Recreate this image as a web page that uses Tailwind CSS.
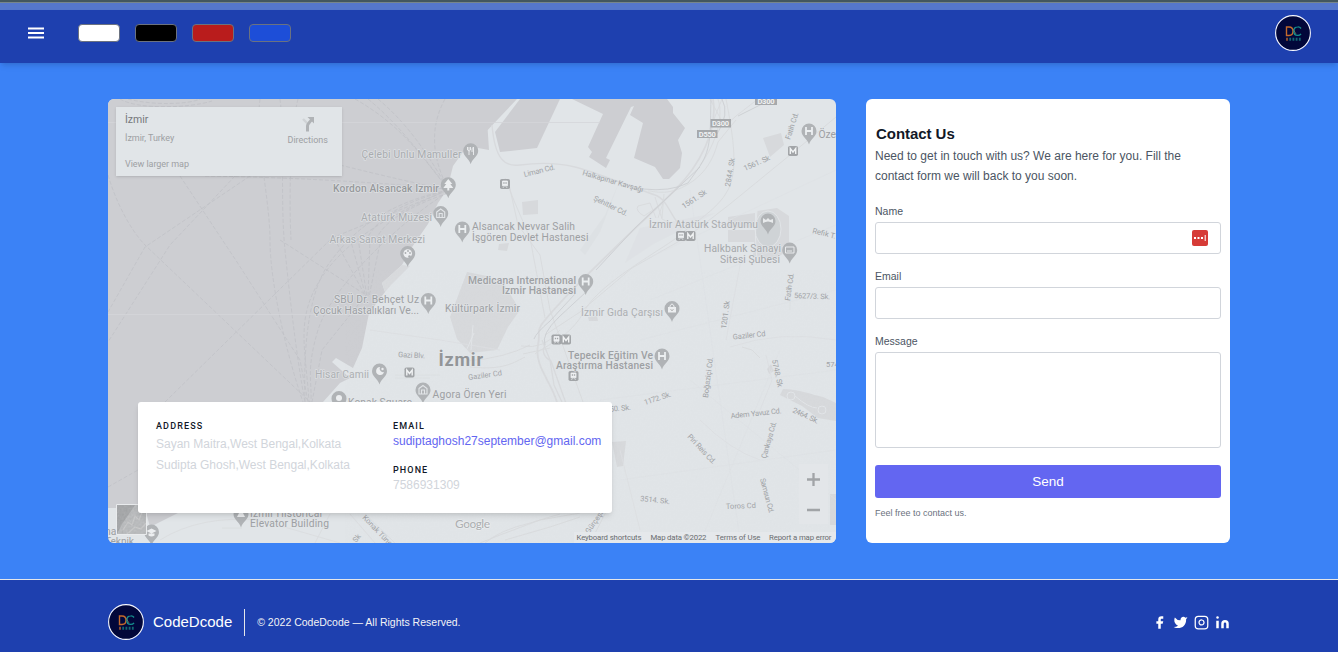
<!DOCTYPE html>
<html lang="en">
<head>
<meta charset="utf-8">
<title>CodeDcode – Contact</title>
<script src="https://cdn.jsdelivr.net/npm/@tailwindcss/browser@4"></script>
</head>
<body class="h-[652px] overflow-hidden bg-[#3b82f6] font-['Liberation_Sans',Arial,sans-serif] flex flex-col">

<svg class="hidden">
  <defs>
    <symbol id="logo" viewBox="0 0 36 36">
      <circle cx="18" cy="18" r="17.4" fill="#02073a" stroke="#f4f6ff" stroke-width="1.1"/>
      <path d="M11.500 12h2.500c2.700 0 4 2 4 4.300s-1.500 4.200-4 4.200h-2.500z" fill="none" stroke="#c4692b" stroke-width="1.400"/>
      <path d="M26 13.500c-.8-1.200-2-1.700-3.300-1.600-2.400.1-3.900 1.900-3.900 4.300s1.600 4.200 3.900 4.200c1.500 0 2.600-.6 3.300-1.600" fill="none" stroke="#16908f" stroke-width="1.400"/>
      <path d="M18 14l3 5" stroke="#6d7f62" stroke-width=".8"/>
      <path d="M11 24.300h2" stroke="#a85c30" stroke-width="3" opacity=".8"/>
      <path d="M14.300 24.300h12" stroke="#16807f" stroke-width="3" stroke-dasharray="1.800 1.400" opacity=".8"/>
    </symbol>
  </defs>
</svg>

<div class="h-[10px] shrink-0 bg-[#5577cb] border-t-2 border-[#43575e]"><div class="h-px bg-[#77868a]"></div></div>

<header class="relative h-[53px] shrink-0 bg-[#1e40af] flex items-start px-[27px] shadow-md">
  <svg class="w-[18px] h-[14px] mt-4" viewBox="0 0 18 14"><path d="M1 2.500h16M1 7h16M1 11.500h16" stroke="#fff" stroke-width="2.100"/></svg>
  <div class="flex gap-[15px] ml-[33px] mt-[14px]">
    <span class="w-[42px] h-[18px] rounded border border-[#6b7280] bg-white"></span>
    <span class="w-[42px] h-[18px] rounded border border-[#6b7280] bg-black"></span>
    <span class="w-[42px] h-[18px] rounded border border-[#6b7280] bg-[#b91c1c]"></span>
    <span class="w-[42px] h-[18px] rounded border border-[#6b7280] bg-[#1d4ed8]"></span>
  </div>
  <svg class="w-9 h-9 ml-auto mt-[5px]"><use href="#logo"/></svg>
</header>

<main class="flex-1 flex items-start px-[108px] pt-9 gap-[30px]">
  <section class="relative w-[728px] h-[444px] rounded-md overflow-hidden bg-[#e1e5e8]">
    <svg class="block w-[728px] h-[444px] font-[Roboto,sans-serif]" viewBox="108 99 728 444">
      <defs>
        <g id="pin"><path d="M0 13.500C-1.500 8-7.500 5.500-7.500 0a7.500 7.500 0 0 1 15 0C7.500 5.500 1.500 8 0 13.500z" fill="#b0b3b6"/></g>
        <g id="pinH"><use href="#pin"/><path d="M-3 -4v8M3 -4v8M-3 0h6" stroke="#eceff1" stroke-width="1.800"/></g>
        <g id="pinMuseum"><use href="#pin"/><path d="M-4 -1.500L0-4.500 4-1.500v5.500h-8zM-1.500 3.500V0h3v3.500" fill="none" stroke="#e2e5e8" stroke-width="1.100"/></g>
        <g id="metro"><rect x="-5" y="-5" width="10" height="10" rx="1.800" fill="#a2a5a8"/><path d="M-2.700 3v-5.500L0 1l2.700-3.500V3" fill="none" stroke="#f0f2f3" stroke-width="1.400"/></g>
        <g id="tram"><rect x="-5" y="-5" width="10" height="10" rx="1.800" fill="#a2a5a8"/><path d="M-2.500 -3h5v4.800h-5zM-2 3.800l1-1.300M2 3.800l-1-1.300" fill="#eef0f2" stroke="#eef0f2" stroke-width=".8"/><path d="M-1.700 -1.800h1.300v1.500h-1.300zM.4 -1.800h1.300v1.500H.4z" fill="#a2a5a8"/></g>
        <filter id="grain" x="0" y="0" width="1" height="1"><feTurbulence type="fractalNoise" baseFrequency=".5" numOctaves="2"/><feColorMatrix type="saturate" values="0"/></filter>
      </defs>

      <!-- sea -->
      <g fill="#cdced2">
        <path d="M108 99H517L487.700 130 489 150 478 148 463 152 453 166 447 190 438 203 428 224 410 250 402 265 382 283 385 292 369 313 362 348 353 368 336 358 332 362 350 378 340 383 323 402 180 512 150 527 145 508 108 508z"/>
        <path d="M520 99h40L537 148 500 152 495 132z"/>
        <path d="M572 99L603 114 588 147 592 152 589 157 606 168 610 160 606 158 631 107 634 106 630 115 643 123 634 158 655 167 663 179H669L680 168 682 153 678 140 685 128 673 113V107L667 99z"/>
      </g>
      <path d="M402 265L382 283 385 292 392 284 410 266z" fill="#d8dadd"/>

      <!-- ferry lines -->
      <g fill="none" stroke="#c0c2c6" stroke-width=".8" stroke-dasharray="4 2">
        <path d="M120 99C138 110 190 108 212 101M128 99C155 106 190 104 200 99M108 175C120 215 138 238 145 245L310 402"/>
        <path d="M180 176L237 262 300 360 308 402M250 176L145 247 108 312M235 176L170 245 108 342"/>
        <path d="M260 99C255 140 270 200 270 240S285 350 303 402M280 99C285 140 280 200 285 250S297 360 305 402M298 99C290 130 289 200 291 240"/>
        <path d="M355 99C410 130 430 170 448 188M368 99C400 125 425 160 448 188M378 99C415 130 433 165 448 188M445 99C425 135 438 170 448 188"/>
        <path d="M205 176Q330 178 448 189M340 165Q400 180 448 190M448 190C380 205 350 235 330 262S303 340 305 402M448 190C390 215 345 240 320 280S306 350 309 402M448 192C395 225 330 290 318 330S312 380 311 402"/>
        <path d="M165 402L332 238 448 190M280 240L366 295 322 350 312 402M334 238L366 297M350 238L366 297M358 238L367 297M370 238L368 297M381 238L369 297"/>
        <path d="M448 190C415 200 382 210 366 240M448 193C420 203 384 218 376 240M108 487L138 470"/>
      </g>
      <path d="M108 122.500H600M108 314.500H368" stroke="#d4d6d9" stroke-width=".8"/>

      <!-- parks and blocks -->
      <g fill="#d7d9dc">
        <path d="M467 272L487 276 505 286 520 310 508 327 497 350 470 353 457 339 450 317z"/>
        <path d="M522 202l16-2v14l-15 1zM499 244l10-1-2 8-9-1z"/>
        <path d="M757 211l20-3 12 8v34l-16 10-20-4zM728 217l27-4v15h-27zM728 230h27v12h-27zM763 138l18-5 3 12-14 12z"/>
        <path d="M783 389c15 0 30 6 40 8l13 6v18l-18-3-16-12-22-11zM612 442l14-1-3 25-6 1zM830 494h6v31h-6zM767 369l4-5 3 7-5 3zM588 317l9-1 1 5-9 0z"/>
        <path d="M605 215L620 180 600 232 585 255 580 250z" opacity=".35"/>
        <path d="M640 228l75-15-60 30-30 20z" opacity=".25"/>
      </g>
      <ellipse cx="768" cy="229" rx="13" ry="18" fill="#cfd3d6" stroke="#e1e4e7"/>
      <g fill="none" stroke="#e2e5e8"><path d="M728 229h27M757 211q-3 25 0 47M471 350l2-25M466 351l8-18"/><circle cx="791" cy="396" r="4"/><circle cx="822" cy="410" r="4"/><path d="M795 396q14 12 22 12"/></g>

      <!-- roads -->
      <g fill="none" stroke="#d8dadd" stroke-width=".9">
        <path d="M492 125C495 160 505 167 520 165S555 162 575 167 640 190 655 195 672 225 686 228" stroke-width="1.400"/>
        <path d="M713 99C718 130 700 165 675 190S590 270 560 303 542 325 538 345 550 380 557 402" stroke-width="1.800"/>
        <path d="M718 99C725 120 712 150 700 165M736 120L718 142C713 160 705 175 685 186S650 190 648 191"/>
        <path d="M710 99l15 28M722 99l-12 30M758 99L736 116 725 126M726 99C734 140 738 170 728 190S690 225 680 235 600 282 585 310 546 345 535 354"/>
        <path d="M836 117L790 155 730 204 690 235 632 268 580 312 545 335M663 203L644 216q-9-5-6-10l12-3 6 15M655 197l7 22 8 4M663 203l-5 15M664 194l-2 24"/>
        <path d="M508 180L518 225 540 255 550 310 568 360 583 402M505 178l10 25 15 35 15 80M521 346Q545 350 560 330M523 354L550 348"/>
        <path d="M470 367C500 370 510 365 525 357M467 361Q505 358 530 345"/>
        <path d="M395 375H440M395 378H430M370 330l70 10 60 10" stroke="#dcdfe2"/>
        <path d="M542 340l8 20 4 25 14 30M545 345q-5 10 6 16l18 51" stroke-width="1.300"/>
        <path d="M480 543L500 535 540 520 580 513M485 543Q500 530 530 523L560 514M505 540l45-13 30-10M590 543l18-35"/>
        <path d="M365 514l30 29M350 514l25 29M330 514l-15 29M160 540Q200 515 260 520L340 543M222 528h20M108 535q20-15 42-5" stroke="#dadcdf"/>
        <path d="M620 450l20 80M730 347Q780 330 836 340M741 260l-15 80M790 280v30M700 420q30 30 60 40M760 410l12-30-6-25" stroke="#dcdfe2"/><path d="M742 347l10 3 8 8"/>
      </g>
      <g fill="none" stroke="#c9cccf" stroke-width=".8"><path d="M711 99C710 130 712 148 700 166L688 183Q670 192 643 189M722 99q8 15-5 35M700 167L635 228 596 270M586 292l-27 25q-18 17-14 28M575 294l-25 27q-14 12-16 18M738 116L762 104"/></g>
      <path d="M640 262L836 170M650 300L836 225M690 190L740 540M640 340L836 290M600 400L836 370M620 480L836 450M690 380L836 500M780 350L700 543" stroke="#dee1e4" stroke-width=".6" fill="none"/>
      <path d="M400 270h436v273H560V402H345l40-110z" filter="url(#grain)" opacity=".025"/>

      <!-- road shields -->
      <g fill="#a6a9ac"><path d="M755 99h22v6h-22zM710.500 119h20.500v8.500h-20.500zM697 130h20.500v8h-20.500z"/></g>
      <g fill="#f0f2f3" font-size="7.500" font-weight="700" text-anchor="middle"><text x="766" y="103.500" textLength="17">D300</text><text x="720.500" y="126" textLength="17">D300</text><text x="707.300" y="137" textLength="17">D550</text></g>

      <!-- pins -->
      <g>
        <use href="#pin" x="470.700" y="150.700"/><path d="M467.500 147v3q2 2 3 0v-3M469 147v8M473.500 155v-8q-2 1-1.500 5" fill="none" stroke="#e8eaec"/>
        <use href="#pin" x="448.300" y="184.700"/><path d="M448.300 179l4 5h-2l3 4h-4v2.500h-2V188h-4l3-4h-2z" fill="#eceef0"/>
        <use href="#pinMuseum" x="440.700" y="213.500"/><use href="#pinH" x="462.300" y="229"/>
        <use href="#pin" x="407.700" y="253.500"/><circle cx="407.700" cy="253.500" r="4.300" fill="#eceef0"/><g fill="#a9acaf"><circle cx="405.500" cy="253" r=".9"/><circle cx="408" cy="251" r=".9"/><circle cx="410" cy="253" r=".9"/><circle cx="409.500" cy="256.500" r="1.300"/></g>
        <use href="#pinH" x="428.300" y="300.500"/><use href="#pinH" x="585.700" y="281.500"/><use href="#pinH" x="662" y="356"/><use href="#pinH" x="809" y="131"/>
        <use href="#pin" x="672" y="308.500"/><path d="M668 307h8v5.500h-8z" fill="#eceef0"/><path d="M670 307v-1q2-4 4 0v1" fill="none" stroke="#eceef0"/><path d="M670.500 309.500q1.500 2 3 0" stroke="#aaa" fill="none"/>
        <use href="#pin" x="379.500" y="371"/><path d="M380 367a4 4 0 1 0 4 5 3.500 3.500 0 0 1-4-5z" fill="#eceef0"/><circle cx="382.500" cy="369" r="1.200" fill="#eceef0"/>
        <use href="#pinMuseum" x="423" y="390"/>
        <use href="#pin" x="339" y="398.500"/><circle cx="339" cy="398" r="3" fill="#eceef0"/>
        <use href="#pin" x="768" y="221"/><path d="M763 223q5-3 10 0v-4l-3 1-2-2-2 2-3-2z" fill="#e8eaec"/>
        <use href="#pin" x="789.700" y="250"/><path d="M785.500 247h8.500v6h-8.500z" fill="none" stroke="#e8eaec"/><path d="M787 251h5" stroke="#e8eaec"/>
        <use href="#pin" x="241" y="514"/><path d="M237 517h8l-2-4h-4z" fill="#eceef0"/>
        <use href="#pin" x="151.500" y="532"/><path d="M146.500 531l5-2.500 5 2.500-5 2.500zM148.500 533.500v2q3 2 6 0v-2" fill="#eceef0"/>
        <use href="#tram" x="505" y="184"/><use href="#metro" x="793" y="151"/><use href="#tram" x="681" y="236"/><use href="#metro" x="690.500" y="236"/>
        <use href="#tram" x="556.500" y="339.500"/><use href="#metro" x="566" y="339.500"/><use href="#tram" x="573.500" y="376"/><use href="#metro" x="409.500" y="372.500"/>
      </g>

      <!-- place names -->
      <g font-size="10.300" fill="#9da0a3" stroke="#e3e6e9" stroke-width="1.600" stroke-opacity=".7" paint-order="stroke" stroke-linejoin="round">
        <text x="361.500" y="158" textLength="100" fill="#a9acaf">Çelebi Unlu Mamuller</text>
        <text x="333" y="192" textLength="106" fill="#97999c" font-weight="500">Kordon Alsancak Izmir</text>
        <text x="361" y="220.500" textLength="71" fill="#a9acaf">Atatürk Müzesi</text>
        <text x="329.500" y="243" textLength="95.500" fill="#a9acaf">Arkas Sanat Merkezi</text>
        <text x="472" y="230" textLength="103">Alsancak Nevvar Salih</text>
        <text x="472" y="241" textLength="116.500">İşgören Devlet Hastanesi</text>
        <text x="649" y="228" textLength="109" fill="#a9acaf">İzmir Atatürk Stadyumu</text>
        <text x="704" y="252" textLength="77" fill="#a5a8ab">Halkbank Sanayi</text>
        <text x="720" y="263" textLength="60" fill="#a5a8ab">Sitesi Şubesi</text>
        <text x="818.500" y="137.500">Öze</text>
        <text x="468" y="283.500" textLength="108" font-weight="500">Medicana International</text>
        <text x="502" y="294" textLength="74" font-weight="500">İzmir Hastanesi</text>
        <text x="334" y="303" textLength="85">SBÜ Dr. Behçet Uz</text>
        <text x="313" y="313.500" textLength="106">Çocuk Hastalıkları Ve...</text>
        <text x="445" y="312" textLength="75">Kültürpark İzmir</text>
        <text x="581" y="316" textLength="82" fill="#adb0b3">İzmir Gıda Çarşısı</text>
        <text x="568" y="358.500" textLength="85" font-weight="500">Tepecik Eğitim Ve</text>
        <text x="556" y="369" textLength="97" font-weight="500">Araştırma Hastanesi</text>
        <text x="315" y="378" textLength="54" fill="#adb0b3">Hisar Camii</text>
        <text x="432.500" y="397.500" textLength="74">Agora Ören Yeri</text>
        <text x="348" y="405.500" textLength="64">Konak Square</text>
        <text x="250" y="516.500" textLength="72">İzmir Historical</text>
        <text x="250" y="527" textLength="79">Elevator Building</text>
        <text x="105" y="534.500">na</text><text x="105" y="545" textLength="29">Teknik</text>
        <text x="438.500" y="366" font-size="18" font-weight="700" textLength="44.500" fill="#929598">İzmir</text>
      </g>

      <!-- street names -->
      <g font-size="7.500" fill="#a0a3a6">
        <text transform="translate(524.500 177) rotate(-14)" textLength="32">Liman Cd.</text>
        <text transform="translate(582 175) rotate(16)" textLength="63">Halkapınar Kavşağı</text>
        <text transform="translate(593 200) rotate(26)" textLength="37">Şehitler Cd.</text>
        <text transform="translate(684 209) rotate(-34)" textLength="28">1561. Sk</text>
        <text transform="translate(745 171) rotate(-24)" textLength="28">1561. Sk</text>
        <text transform="translate(730 187) rotate(-80)" textLength="29">2844. Sk</text>
        <text transform="translate(790 140) rotate(-72)" textLength="28">Fatih Cd.</text>
        <text transform="translate(812 233) rotate(14)">Refik T.</text>
        <text transform="translate(790 301) rotate(-82)" textLength="28">Fatih Cd.</text>
        <text transform="translate(794 298) rotate(2)" textLength="36">5627/3. Sk.</text>
        <text transform="translate(726 329) rotate(-82)" textLength="28">1201. Sk</text>
        <text transform="translate(733 339.500) rotate(-6)" textLength="33">Gaziler Cd</text>
        <text transform="translate(708 398) rotate(-83)" textLength="41">Boğaziçi Cd.</text>
        <text transform="translate(772 360) rotate(78)" textLength="28">5748. Sk</text>
        <text x="826" y="367">574</text>
        <text transform="translate(468.500 380) rotate(-8)" textLength="34">Gaziler Cd</text>
        <text transform="translate(398 357) rotate(3)" textLength="27">Gazi Blv.</text>
        <text transform="translate(645 405) rotate(-18)" textLength="28">1172. Sk.</text>
        <text transform="translate(606 412) rotate(-5)" textLength="25">150. Sk.</text>
        <text transform="translate(731 418.500) rotate(-6)" textLength="51">Adem Yavuz Cd.</text>
        <text transform="translate(792 412) rotate(25)" textLength="28">2464. Sk.</text>
        <text transform="translate(766 459) rotate(-74)" textLength="38">Çankaya Cd.</text>
        <text transform="translate(687 437) rotate(47)" textLength="38">Piri Reis Cd.</text>
        <text transform="translate(760 479) rotate(75)" textLength="36">Samsun Cd.</text>
        <text transform="translate(726 509) rotate(-2)" textLength="30">Toros Cd</text>
        <text transform="translate(640 501) rotate(6)" textLength="30">3514. Sk.</text>
        <text transform="translate(589 534) rotate(-55)">Gürçeşme</text>
        <text transform="translate(362 518) rotate(46)" textLength="43">Konak Tüneli</text>
        <text transform="translate(356 543) rotate(-50)">Sk</text>
      </g>
      <text x="455" y="527.500" font-size="12" font-weight="500" fill="#adb0b3" stroke="#eef0f2" stroke-width="1.200" paint-order="stroke" textLength="35" class="font-[Lato,sans-serif]">Google</text>

      <!-- satellite thumbnail -->
      <g><path d="M116.500 504.500h30v30h-30z" fill="#a2a4a6"/><path d="M117 534l5-10 9-13 4-6h11v29z" fill="#b9bbbd"/><path d="M123 530l5-8 4 3 3-9 4 4 3-8M127 534l8-7 6 2 5-6" fill="none" stroke="#c8c9ca" stroke-width="1.200"/><path d="M117 534h29v-30h-29z" filter="url(#grain)" opacity=".25"/><path d="M116.500 504.500h30v30h-30z" fill="none" stroke="#e9ebed"/></g>

      <!-- zoom control -->
      <path d="M799 464h29v60h-29z" fill="#e3e6e9"/><path d="M807 479.500h13M813.500 473v13M807 510h13" stroke="#a1a4a7" stroke-width="2.300"/>
      <path d="M574 532h262v11H574z" fill="#e5e8eb"/>
      <g font-size="7.800" fill="#6a6d70"><text x="576.500" y="540" textLength="65">Keyboard shortcuts</text><text x="650.500" y="540" textLength="56">Map data ©2022</text><text x="715.500" y="540" textLength="45">Terms of Use</text><text x="769" y="540" textLength="62.500">Report a map error</text></g>
    </svg>

    <div class="absolute left-2 top-2 w-[226px] h-[69px] bg-[#e1e5e8] shadow-sm flex justify-between pl-[9px] pr-[14px] font-[Roboto,sans-serif] text-[9px] leading-3 text-[#9da0a3]">
      <div class="flex flex-col pt-[7px]">
        <span class="text-[10.500px] text-[#75787b]">İzmir</span>
        <span class="mt-1.5 tracking-[-0.050px]">İzmir, Turkey</span>
        <span class="mt-[14px] tracking-[-0.050px]">View larger map</span>
      </div>
      <div class="flex flex-col items-center pt-[9px]">
        <svg class="w-4 h-4" viewBox="0 0 16 16"><path d="M3 3l5 5" stroke="#d0d3d6" stroke-width="2.400"/><path d="M7.500 15.500V10Q7.500 8 12 3.500" fill="none" stroke="#b0b3b6" stroke-width="3"/><path d="M7.500 1H14v6.500z" fill="#b0b3b6"/></svg>
        <span class="mt-[2px] tracking-[0.010px]">Directions</span>
      </div>
    </div>

    <div class="absolute left-[30px] top-[303px] w-[474px] h-[111px] rounded-[3px] bg-white shadow-md flex pl-[18px] pt-[18px]">
      <div class="w-[237px]">
        <h2 class="font-[Roboto,sans-serif] text-[9px] leading-3 font-medium tracking-[1.150px] text-[#111827]">ADDRESS</h2>
        <p class="mt-0.5 text-[12px] leading-[21px] text-[#d1d5db]">Sayan Maitra,West Bengal,Kolkata<br>Sudipta Ghosh,West Bengal,Kolkata</p>
      </div>
      <div>
        <h2 class="font-[Roboto,sans-serif] text-[9px] leading-3 font-medium tracking-[1.100px] text-[#111827]">EMAIL</h2>
        <p class="text-[12px] leading-[18px] text-[#6366f1]">sudiptaghosh27september@gmail.com</p>
        <h2 class="mt-[14px] font-[Roboto,sans-serif] text-[9px] leading-3 font-medium tracking-[1.100px] text-[#111827]">PHONE</h2>
        <p class="text-[12px] leading-[18px] text-[#d1d5db]">7586931309</p>
      </div>
    </div>
  </section>

  <form class="w-[364px] h-[444px] rounded-md bg-white px-[9px] pt-[24px] flex flex-col">
    <h1 class="pl-px text-[15px] leading-[21px] font-bold tracking-[-0.050px] text-[#111827]">Contact Us</h1>
    <p class="mt-0.5 text-[12px] leading-[20px] text-[#4b5563]">Need to get in touch with us? We are here for you. Fill the<br>contact form we will back to you soon.</p>
    <label class="mt-[15px] text-[10.500px] leading-[21px] text-[#4b5563]">Name</label>
    <div class="h-8 rounded-[3px] border border-[#d1d5db] flex items-center justify-end pr-3">
      <svg class="w-4 h-4" viewBox="0 0 16 16"><rect width="16" height="16" rx="2" fill="#d63b37"/><path d="M2 7h2v2H2zM5.500 7h2v2h-2zM9 7h2v2H9zM12.700 5h1v6h-1z" fill="#fff"/></svg>
    </div>
    <label class="mt-3 text-[10.500px] leading-[21px] text-[#4b5563]">Email</label>
    <div class="h-8 rounded-[3px] border border-[#d1d5db]"></div>
    <label class="mt-3 text-[10.500px] leading-[21px] text-[#4b5563]">Message</label>
    <div class="h-24 rounded-[3px] border border-[#d1d5db]"></div>
    <button type="button" class="mt-[17px] h-[33px] rounded-[3px] bg-[#6366f1] text-[13.500px] leading-none text-white">Send</button>
    <p class="mt-[9px] text-[9px] leading-3 text-[#6b7280]">Feel free to contact us.</p>
  </form>
</main>

<footer class="h-[73px] shrink-0 bg-[#1e40af] border-t border-[#e5e7eb] flex items-center px-[108px] pt-3">
  <svg class="w-9 h-9"><use href="#logo"/></svg>
  <span class="ml-[9px] pt-px text-[15px] text-white">CodeDcode</span>
  <span class="ml-3 h-[27px] border-l border-[#e5e7eb]"></span>
  <span class="ml-3 pt-0.5 text-[10.500px] text-[#f3f4f6]">© 2022 CodeDcode — All Rights Reserved.</span>
  <div class="ml-auto flex items-center gap-[6px]">
    <svg class="w-[15px] h-[15px]" viewBox="0 0 24 24" fill="#fff"><path d="M18 2h-3a5 5 0 0 0-5 5v3H7v4h3v8h4v-8h3l1-4h-4V7a1 1 0 0 1 1-1h3z"/></svg>
    <svg class="w-[15px] h-[15px]" viewBox="0 0 24 24" fill="#fff"><path d="M23 3a10.900 10.900 0 0 1-3.140 1.530 4.480 4.480 0 0 0-7.860 3v1A10.660 10.660 0 0 1 3 4s-4 9 5 13a11.640 11.640 0 0 1-7 2c9 5 20 0 20-11.500a4.500 4.500 0 0 0-.08-.83A7.720 7.720 0 0 0 23 3z"/></svg>
    <svg class="w-[15px] h-[15px]" viewBox="0 0 24 24" fill="none" stroke="#fff" stroke-width="2"><rect x="2" y="2" width="20" height="20" rx="5"/><path d="M16 11.370A4 4 0 1 1 12.630 8 4 4 0 0 1 16 11.370zm1.500-4.870h.01"/></svg>
    <svg class="w-[15px] h-[15px]" viewBox="0 0 24 24" fill="#fff"><path d="M16 8a6 6 0 0 1 6 6v7h-4v-7a2 2 0 0 0-4 0v7h-4v-7a6 6 0 0 1 6-6zM2 9h4v12H2z"/><circle cx="4" cy="4" r="2"/></svg>
  </div>
</footer>
</body>
</html>
